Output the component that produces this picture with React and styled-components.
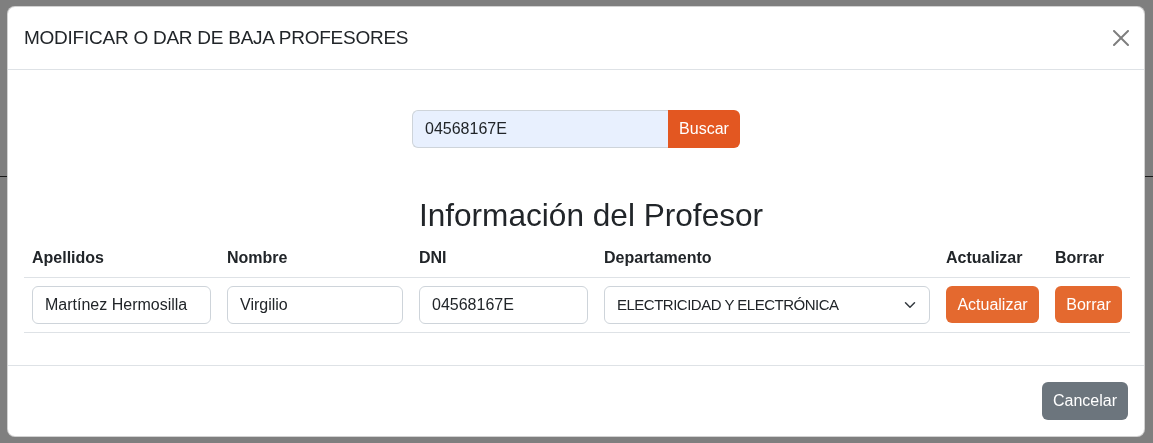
import React from "react";
import styled, { createGlobalStyle } from "styled-components";

const FONT = `"Liberation Sans", Arial, "Noto Sans", sans-serif`;

const GlobalStyle = createGlobalStyle`
  html, body { margin: 0; padding: 0; }
  body {
    font-family: ${FONT};
    color: #212529;
    background: #ffffff;
    overflow: hidden;
  }
  * { box-sizing: border-box; }
`;

const Page = styled.div`
  width: 1153px;
  height: 443px;
  background: #ffffff;
`;

const PageHeader = styled.header`
  height: 177px;
  border-bottom: 1px solid #333;
`;

const Backdrop = styled.div`
  position: fixed;
  inset: 0;
  background: rgba(0, 0, 0, 0.5);
`;

const ModalWrap = styled.div`
  position: fixed;
  top: 6px;
  left: 7px;
  width: 1138px;
`;

const ModalContent = styled.div`
  display: flex;
  flex-direction: column;
  background: #fff;
  border: 1px solid rgba(0, 0, 0, 0.175);
  border-radius: 8px;
`;

const ModalHeader = styled.div`
  display: flex;
  align-items: center;
  justify-content: space-between;
  padding: 16px;
  border-bottom: 1px solid #dee2e6;
`;

const Title = styled.h5`
  margin: 0;
  font-size: 19px;
  letter-spacing: -0.25px;
  font-weight: 400;
  line-height: 30px;
`;

const CloseBtn = styled.button`
  width: 24px;
  height: 24px;
  padding: 4px;
  margin: -8px -5px -8px auto;
  border: 0;
  background: transparent;
  display: flex;
  align-items: center;
  justify-content: center;
  opacity: 0.5;
  cursor: pointer;
  svg { display: block; }
`;

const ModalBody = styled.div`
  padding: 16px;
`;

const SearchGroup = styled.div`
  display: flex;
  width: 328px;
  margin: 24px auto 0;
`;

const SearchInput = styled.input`
  flex: none;
  width: 256px;
  height: 38px;
  padding: 6px 12px;
  font-family: ${FONT};
  font-size: 16px;
  color: #212529;
  background: #e8f0fe;
  border: 1px solid #ced4da;
  border-right: 0;
  border-radius: 6px 0 0 6px;
  outline: none;
`;

const OrangeButton = styled.button`
  flex: none;
  width: ${(p) => p.$w}px;
  height: ${(p) => (p.$joined ? "38px" : "37px")};
  padding: 6px 0;
  text-align: center;
  font-family: ${FONT};
  font-size: 16px;
  line-height: 1.5;
  color: #fff;
  background: ${(p) => (p.$dark ? "#e35721" : "#e4692f")};
  border: 0;
  border-radius: ${(p) => (p.$joined ? "0 6px 6px 0" : "6px")};
  cursor: pointer;
  white-space: nowrap;
`;

const SectionTitle = styled.h2`
  margin: 49px 0 2px;
  padding-left: 30px;
  text-align: center;
  font-size: 31.6px;
  font-weight: 400;
  line-height: 1.2;
`;

const Table = styled.table`
  width: 100%;
  table-layout: fixed;
  border-collapse: collapse;
  margin-bottom: 16px;
`;

const Th = styled.th`
  padding: 9px 8px 7px;
  text-align: left;
  font-size: 16px;
  font-weight: 700;
  line-height: 1.5;
  border-bottom: 1px solid #dee2e6;
  white-space: nowrap;
`;

const Td = styled.td`
  padding: 8px;
  border-bottom: 1px solid #dee2e6;
  vertical-align: middle;
`;

const FieldInput = styled.input`
  display: block;
  width: 100%;
  height: 38px;
  padding: 6px 12px;
  font-family: ${FONT};
  font-size: 16px;
  color: #212529;
  background: #fff;
  border: 1px solid #ced4da;
  border-radius: 6px;
  outline: none;
`;

const SelectWrap = styled.div`
  position: relative;
`;

const Select = styled.select`
  display: block;
  width: 100%;
  height: 38px;
  padding: 6px 36px 6px 12px;
  font-family: ${FONT};
  font-size: 15px;
  letter-spacing: -0.5px;
  color: #212529;
  background: #fff;
  border: 1px solid #ced4da;
  border-radius: 6px;
  appearance: none;
  outline: none;
`;

const Chevron = styled.svg`
  position: absolute;
  right: 12px;
  top: 13px;
  pointer-events: none;
`;

const ModalFooter = styled.div`
  display: flex;
  justify-content: flex-end;
  align-items: center;
  padding: 12px;
  border-top: 1px solid #dee2e6;
`;

const GrayButton = styled.button`
  margin: 4px;
  height: 38px;
  padding: 6px 11px;
  font-family: ${FONT};
  font-size: 16px;
  line-height: 1.5;
  color: #fff;
  background: #6c757d;
  border: 0;
  border-radius: 6px;
  cursor: pointer;
`;

const columns = [
  { label: "Apellidos", width: 195 },
  { label: "Nombre", width: 192 },
  { label: "DNI", width: 185 },
  { label: "Departamento", width: 342 },
  { label: "Actualizar", width: 109 },
  { label: "Borrar", width: 83 },
];

export default function App() {
  return (
    <>
      <GlobalStyle />
      <Page>
        <PageHeader />
      </Page>
      <Backdrop />
      <ModalWrap>
        <ModalContent>
          <ModalHeader>
            <Title>MODIFICAR O DAR DE BAJA PROFESORES</Title>
            <CloseBtn aria-label="Cerrar">
              <svg width="16" height="16" viewBox="0 0 16 16">
                <path
                  fill="#000"
                  d="M.293.293a1 1 0 0 1 1.414 0L8 6.586 14.293.293a1 1 0 1 1 1.414 1.414L9.414 8l6.293 6.293a1 1 0 0 1-1.414 1.414L8 9.414l-6.293 6.293a1 1 0 0 1-1.414-1.414L6.586 8 .293 1.707a1 1 0 0 1 0-1.414z"
                />
              </svg>
            </CloseBtn>
          </ModalHeader>
          <ModalBody>
            <SearchGroup>
              <SearchInput defaultValue="04568167E" />
              <OrangeButton $dark $joined $w={72}>Buscar</OrangeButton>
            </SearchGroup>
            <SectionTitle>Información del Profesor</SectionTitle>
            <Table>
              <colgroup>
                {columns.map((c) => (
                  <col key={c.label} style={{ width: c.width }} />
                ))}
              </colgroup>
              <thead>
                <tr>
                  {columns.map((c) => (
                    <Th key={c.label}>{c.label}</Th>
                  ))}
                </tr>
              </thead>
              <tbody>
                <tr>
                  <Td><FieldInput defaultValue="Martínez Hermosilla" /></Td>
                  <Td><FieldInput defaultValue="Virgilio" /></Td>
                  <Td><FieldInput defaultValue="04568167E" /></Td>
                  <Td>
                    <SelectWrap>
                      <Select defaultValue="ee">
                        <option value="ee">ELECTRICIDAD Y ELECTRÓNICA</option>
                      </Select>
                      <Chevron width="16" height="12" viewBox="0 0 16 16">
                        <path d="m2 5 6 6 6-6" stroke="#343a40" strokeWidth="2" strokeLinecap="round" strokeLinejoin="round" fill="none" />
                      </Chevron>
                    </SelectWrap>
                  </Td>
                  <Td><OrangeButton $w={93}>Actualizar</OrangeButton></Td>
                  <Td><OrangeButton $w={67}>Borrar</OrangeButton></Td>
                </tr>
              </tbody>
            </Table>
          </ModalBody>
          <ModalFooter>
            <GrayButton>Cancelar</GrayButton>
          </ModalFooter>
        </ModalContent>
      </ModalWrap>
    </>
  );
}
